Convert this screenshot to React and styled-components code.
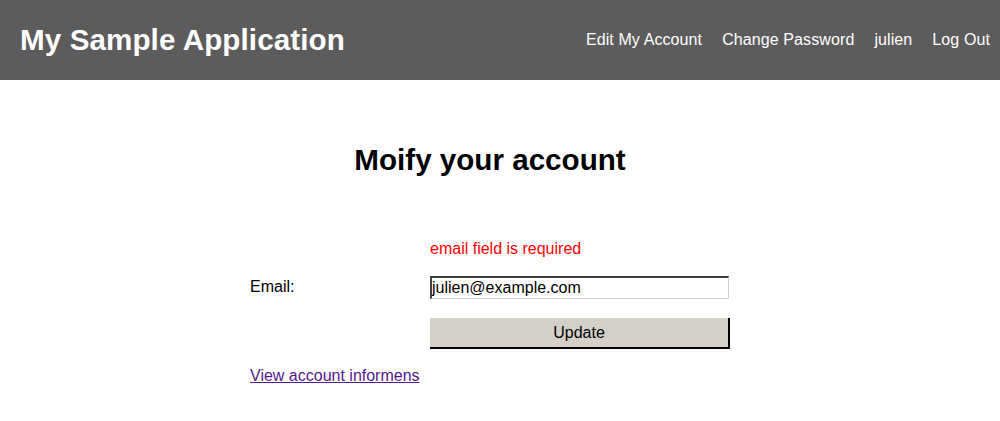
import React from 'react'
import styled, { createGlobalStyle } from 'styled-components'

const GlobalStyle = createGlobalStyle`
  body {
    margin: 0;
    background: #fff;
    font-family: "Liberation Sans", Arial, sans-serif;
  }
`

const Header = styled.header`
  height: 80px;
  background: #5c5c5c;
  display: flex;
  align-items: center;
  justify-content: space-between;
  padding: 0 10px 0 20px;
  color: #fff;
`

const Title = styled.h1`
  margin: 0;
  font-size: 29.6px;
  font-weight: bold;
  letter-spacing: 0.1px;
`

const Nav = styled.nav`
  display: flex;
  gap: 20px;
`

const NavLink = styled.a`
  color: #fff;
  text-decoration: none;
  font-size: 16px;
  letter-spacing: 0.1px;
`

const Main = styled.main`
  width: 480px;
  margin: 0 auto;
  transform: translateX(-10px);
`

const Heading = styled.h2`
  margin: 63px 0 0;
  text-align: center;
  font-size: 29.6px;
  font-weight: bold;
  line-height: 34px;
`

const Form = styled.form`
  margin-top: 62px;
  display: grid;
  grid-template-columns: 180px 300px;
`

const Error = styled.div`
  grid-column: 2;
  color: #ff0000;
  font-size: 16px;
  height: 20px;
  line-height: 20px;
`

const Label = styled.label`
  font-size: 16px;
  margin-top: 18px;
  line-height: 20px;
`

const Input = styled.input`
  margin-top: 17px;
  height: 23px;
  box-sizing: border-box;
  width: 299px;
  border-style: solid;
  border-color: #404040 #d4d0c8 #d4d0c8 #404040;
  border-width: 2px 1px 1px 2px;
  font-family: "Liberation Sans", Arial, sans-serif;
  font-size: 16px;
  padding: 0;
  color: #000;
`

const Button = styled.button`
  grid-column: 2;
  margin-top: 19px;
  height: 31px;
  width: 300px;
  background: #d4d0c8;
  border-style: solid;
  border-width: 0 2px 2px 0;
  border-color: #000;
  font-family: "Liberation Sans", Arial, sans-serif;
  font-size: 16px;
  color: #000;
  padding: 0;
`

const InfoLink = styled.a`
  display: inline-block;
  margin-top: 18px;
  font-size: 16px;
  color: #551a8b;
  text-decoration: underline;
`

export default function App() {
  return (
    <>
      <GlobalStyle />
      <Header>
        <Title>My Sample Application</Title>
        <Nav>
          <NavLink href="#">Edit My Account</NavLink>
          <NavLink href="#">Change Password</NavLink>
          <NavLink href="#">julien</NavLink>
          <NavLink href="#">Log Out</NavLink>
        </Nav>
      </Header>
      <Main>
        <Heading>Moify your account</Heading>
        <Form onSubmit={(e) => e.preventDefault()}>
          <Error>email field is required</Error>
          <Label htmlFor="email">Email:</Label>
          <Input id="email" defaultValue="julien@example.com" />
          <Button type="submit">Update</Button>
        </Form>
        <InfoLink href="#">View account informens</InfoLink>
      </Main>
    </>
  )
}
